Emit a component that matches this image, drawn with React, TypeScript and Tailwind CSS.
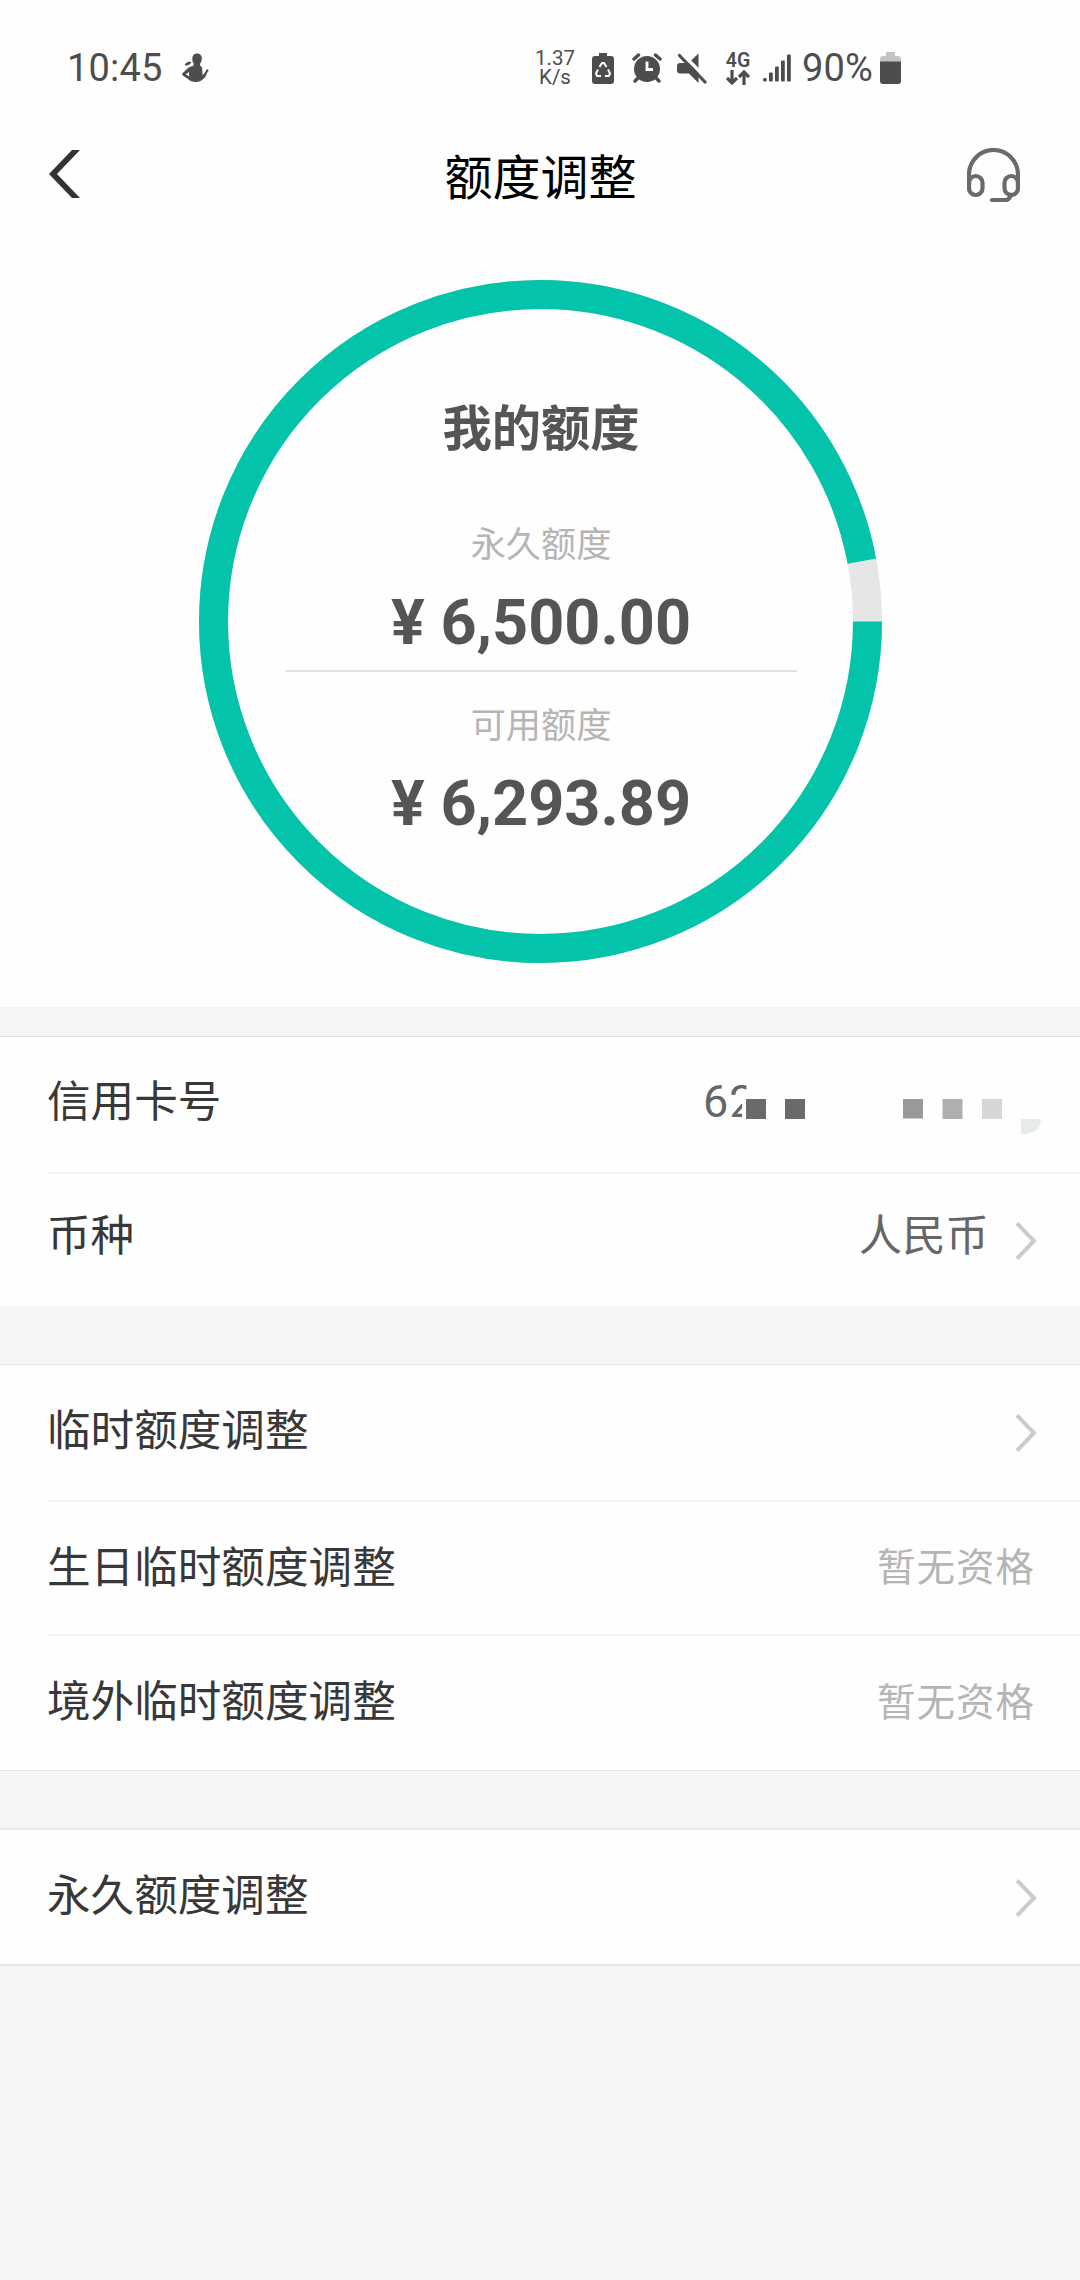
import type { ReactNode } from "react";

function StatusBar() {
  return (
    <div className="flex h-[136px] items-center pl-[67px] font-[Roboto,sans-serif] text-[#4d4d4d]">
      <span className="w-[115px] text-[38px] leading-none tracking-[0.2px]">10:45</span>
      <svg className="h-[31px] w-[27px]" viewBox="0 0 27 30" fill="#4d4d4d">
        <path d="M15 0c3.200 0 4.900 2.200 4.800 5.200-.1 2.300-.8 3.800-1.800 5l.2 1.800 2 2.500.2 6.500 1.300-.2 2.300-3.600.2-.8c.4-.9 1.600-1 2.100-.2.500.8 0 1.600-.7 2l-2.200 5c-.5 1-1.200 1.300-2 2-1.500 1.800-4 3.300-7.400 3.300-4.200 0-7-1.300-8.200-3.200L1 22.200c-1-.8-1-1.700-.2-2.600l5-4.800c1.600-1.500 4-1.800 5.700-2.800l.3-2c-1.200-1.300-1.600-3-1.500-5C10.400 2 12 0 15 0zM7 18.500l-3.200 2.300L7.200 23z" />
        <path d="M2.500 11.800c2-3.400 4-3.800 6.800-3.200-1 2.800-3.500 3.800-6.800 3.200z" />
      </svg>
      <div className="ml-[322px] w-[48px] text-center text-[20.500px] leading-[19.500px]">
        <div>1.37</div>
        <div>K/s</div>
      </div>
      <svg className="ml-[13px] h-[31px] w-[22px]" viewBox="0 0 22 31">
        <path d="M7 0h8v3h4a3 3 0 0 1 3 3v22a3 3 0 0 1-3 3H3a3 3 0 0 1-3-3V6a3 3 0 0 1 3-3h4z" fill="#4d4d4d" />
        <g fill="none" stroke="#fff" strokeWidth="2">
          <path d="M7.500 14 10 10h2l2.500 4M16 16.500l2 4-1.200 2.500H13M9 23H5.200L4 20.500l2-4" />
        </g>
      </svg>
      <svg className="ml-[18px] h-[30px] w-[30px]" viewBox="0 0 30 30">
        <g stroke="#4d4d4d" strokeWidth="3.400" strokeLinecap="round" fill="none">
          <path d="M2 6 6.500 2M23.500 2 28 6M6 25l-3 3M24 25l3 3" />
        </g>
        <circle cx="15" cy="16" r="13" fill="#4d4d4d" />
        <path d="M15 8.500V16.500h6" fill="none" stroke="#fff" strokeWidth="2.800" />
      </svg>
      <svg className="ml-[15px] h-[31px] w-[30px]" viewBox="0 0 30 31">
        <path d="M3 10h8.500L21.500 0.500V30L12 20.500H3A3 3 0 0 1 0 17.500V13A3 3 0 0 1 3 10z" fill="#4d4d4d" />
        <path d="M5 0.500 31 27" stroke="#fff" strokeWidth="3.500" />
        <path d="M2.500 2.500 28 29" stroke="#4d4d4d" strokeWidth="3.200" strokeLinecap="round" />
      </svg>
      <div className="ml-[18px] flex w-[26px] flex-col items-center">
        <span className="text-[19.500px] leading-[18px] font-semibold">4G</span>
        <svg className="h-[15px] w-[24px]" viewBox="0 0 24 15" fill="none" stroke="#4d4d4d" strokeWidth="3.200">
          <path d="M6 0v13M1 8l5 5 5-5M18 15V2M13 7l5-5 5 5" />
        </svg>
      </div>
      <svg className="ml-[12px] h-[28px] w-[28px]" viewBox="0 0 28 28" fill="#4d4d4d">
        <rect x="0" y="24" width="3.800" height="3.600" rx="1.500" />
        <rect x="6" y="18.500" width="3.800" height="9" rx="1" />
        <rect x="12" y="12.500" width="3.800" height="15" rx="1" />
        <rect x="18" y="6.500" width="3.800" height="21" rx="1" />
        <rect x="24" y="0.500" width="3.800" height="27" rx="1" />
      </svg>
      <span className="ml-[11px] w-[72px] text-[38px] leading-none tracking-[0.2px]">90%</span>
      <svg className="ml-[6px] h-[32px] w-[21px]" viewBox="0 0 21 32">
        <path d="M6 0h9v4h3a3 3 0 0 1 3 3v4H0V7a3 3 0 0 1 3-3h3z" fill="#c4c4c4" />
        <path d="M0 9.500h21V29a3 3 0 0 1-3 3H3a3 3 0 0 1-3-3z" fill="#4d4d4d" />
      </svg>
    </div>
  );
}

function TitleBar() {
  return (
    <div className="flex h-[84px] items-center justify-between pr-[60px] pl-[48px]">
      <svg className="mb-[8px] h-[48px] w-[54px]" viewBox="0 0 54 48">
        <path d="M24 0h8L9 24l23 24h-8L1 24z" fill="#333" />
      </svg>
      <h1 className="mb-[8px] ml-[12px] text-[48px] leading-[48px] text-black">额度调整</h1>
      <svg className="mb-[7px] h-[54px] w-[53px]" viewBox="0 0 53 54" fill="none" stroke="#6a6a6a" strokeWidth="4.200">
        <path d="M2 38V26.500a24.500 24.500 0 0 1 49 0V38" />
        <rect x="2" y="28" width="13.500" height="19" rx="6.750" />
        <rect x="37.500" y="28" width="13.500" height="19" rx="6.750" />
        <path d="M44 47q-2 5-5 5H25" strokeLinecap="round" />
      </svg>
    </div>
  );
}

function Amount({ label, value }: { label: string; value: string }) {
  return (
    <div className="flex flex-col items-center">
      <div className="text-[35.200px] leading-[40px] text-[#b5b5b5]">{label}</div>
      <div className="mt-[29px] font-[Roboto,sans-serif] text-[63px] leading-[64px] font-bold text-[#555]">{value}</div>
    </div>
  );
}

function QuotaRing() {
  return (
    <section className="relative flex h-[787px] flex-col items-center pt-[180px] pl-[2px]">
      <svg className="absolute top-[60px] left-[199px] size-[683px]" viewBox="0 0 683 683" fill="none" strokeWidth="29">
        <circle cx="341.500" cy="341.500" r="327" stroke="#e6e6e6" />
        <circle cx="341.500" cy="341.500" r="327" stroke="#03c3ab" pathLength="360" strokeDasharray="349.350 10.650" />
      </svg>
      <h2 className="text-[49.300px] leading-[50px] font-bold text-[#555]">我的额度</h2>
      <div className="mt-[72px]">
        <Amount label="永久额度" value="¥ 6,500.00" />
      </div>
      <div className="mt-[15px] h-[2px] w-[511px] bg-[#e0e0e0]" />
      <div className="mt-[31px]">
        <Amount label="可用额度" value="¥ 6,293.89" />
      </div>
    </section>
  );
}

function Chevron() {
  return (
    <svg className="mt-[7px] h-[38px] w-[22px]" viewBox="0 0 22 38" fill="none" stroke="#cbcbcb" strokeWidth="4">
      <path d="M2 1.500l17 17.500L2 36.500" />
    </svg>
  );
}

function MaskedCard() {
  return (
    <div className="relative mt-[4px] -mr-[4px] flex h-[60px] w-[338px] items-start text-[#666]">
      <span className="mt-[1px] font-[Roboto,sans-serif] text-[45px] leading-[54px] tracking-[1px]">62</span>
      <svg className="absolute inset-0 h-[60px] w-[338px]" viewBox="0 0 338 60">
        <path d="M43.500 0H60V50H39V29L28 42V24L36 20 43.500 15z" fill="#fff" />
        <rect x="43" y="25" width="20" height="20" fill="#6b6969" />
        <rect x="82" y="25" width="20" height="20" fill="#6b6a6a" />
        <rect x="200" y="25" width="20" height="19.500" fill="#999" />
        <rect x="239.500" y="25" width="20" height="20" fill="#b0afb0" />
        <rect x="279" y="25" width="20" height="20" fill="#d6d6d6" />
        <path d="M318 45h20q0 9-8 13l-12 4z" fill="#e6eaea" />
      </svg>
    </div>
  );
}

type RowProps = { label: string; height: string; offset?: string; children?: ReactNode };

function Row({ label, height, offset = "mb-[5px]", children }: RowProps) {
  return (
    <div className={`flex items-center justify-between pr-[43px] pb-[6px] pl-[47px] ${height}`}>
      <span className={`text-[43.600px] leading-[52px] text-[#383838] ${offset}`}>{label}</span>
      <div className="flex items-center">{children}</div>
    </div>
  );
}

function Divider() {
  return <div className="ml-[48px] h-[2px] bg-[#f3f3f3]" />;
}

function NotEligible() {
  return <span className="mr-[2px] mb-[2px] text-[38.500px] leading-[52px] tracking-[1px] text-[#b5b5b5]">暂无资格</span>;
}

export default function App() {
  return (
    <div className="min-h-[2280px] w-[1080px] overflow-hidden bg-[#f5f5f5] font-['Noto_Sans_CJK_SC',sans-serif]">
      <header className="bg-[#fefefe]">
        <StatusBar />
        <TitleBar />
        <QuotaRing />
      </header>
      <section className="mt-[29px] border-t border-[#dedede] bg-[#fefefe]">
        <Row label="信用卡号" height="h-[135px]" offset="mb-[8px]">
          <MaskedCard />
        </Row>
        <Divider />
        <Row label="币种" height="h-[132px]" offset="mb-[10px]">
          <span className="mr-[26px] mb-[10px] text-[43.400px] leading-[52px] text-[#666]">人民币</span>
          <Chevron />
        </Row>
      </section>
      <section className="mt-[58px] border-y border-[#e6e6e6] bg-[#fefefe]">
        <Row label="临时额度调整" height="h-[135px]">
          <Chevron />
        </Row>
        <Divider />
        <Row label="生日临时额度调整" height="h-[132px]" offset="mb-[3px]">
          <NotEligible />
        </Row>
        <Divider />
        <Row label="境外临时额度调整" height="h-[134px]">
          <NotEligible />
        </Row>
      </section>
      <section className="mt-[57px] border-y-2 border-[#e9e9e9] bg-[#fefefe]">
        <Row label="永久额度调整" height="h-[134px]">
          <Chevron />
        </Row>
      </section>
    </div>
  );
}
